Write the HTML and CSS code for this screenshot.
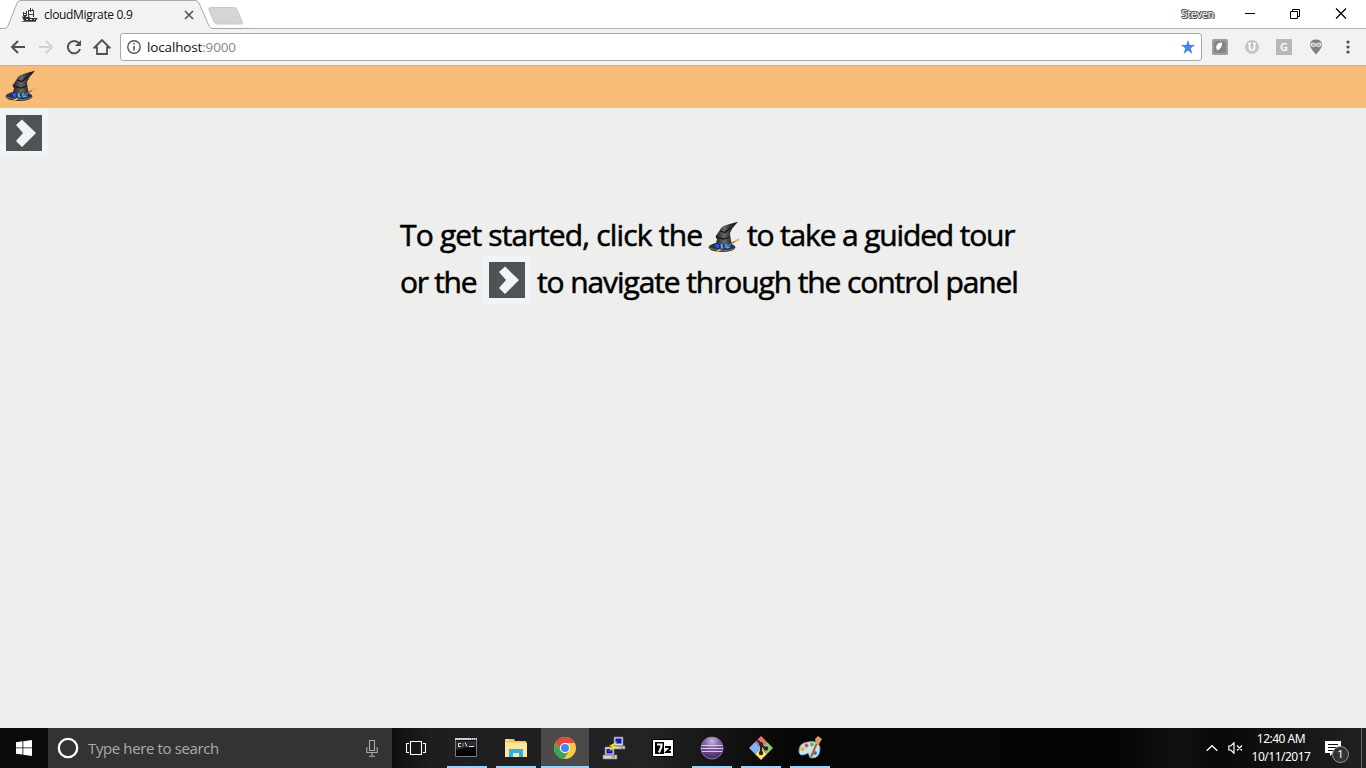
FILE: index.html
```html
<!DOCTYPE html>
<html lang="en">
<head>
<meta charset="utf-8">
<title>cloudMigrate 0.9</title>
<link rel="stylesheet" href="styles.css">
</head>
<body>
<svg class="defs" width="0" height="0" aria-hidden="true">
  <defs>
    <linearGradient id="felt" x1="0" x2="1"><stop offset="0" stop-color="#222"/><stop offset=".4" stop-color="#666"/><stop offset=".7" stop-color="#292929"/><stop offset="1" stop-color="#111"/></linearGradient>
    <radialGradient id="orb" cx=".5" cy=".2" r=".8"><stop offset="0" stop-color="#c9b5e0"/><stop offset=".5" stop-color="#79569f"/><stop offset="1" stop-color="#40265e"/></radialGradient>
    <symbol id="hat" viewBox="0 0 32 32">
      <ellipse cx="14" cy="26.300" rx="13.300" ry="4.800" fill="#353535"/>
      <path d="M1.500 27q12 5 25 .7" fill="none" stroke="#777" stroke-width="1"/>
      <path d="M7.500 24 9 18.500 7.500 15.500 11.500 9.500Q13 5 20 3.500L30 .8 24.500 7 22 12 22.500 17 24 24 17 28Z" fill="url(#felt)"/>
      <path d="m8.500 16 7 2 6.500-2M12 10l5 1.500L22 7" fill="none" stroke="#161616" stroke-width="1.300"/>
      <path d="m6.500 22 7 1.500 10-1 1.500 3.500-8 3-10-1.500Z" fill="#17318b"/>
      <path d="m7.500 23.500 3-.5.5 4-3-.5zm12-.5 4 .5-2 3-3-1z" fill="#2860f0"/>
      <path d="m12.500 23.500 2-.5.5 4-2 .5zm4 1 2-2 1 3 3 1-4 1z" fill="#58b8da"/>
      <path d="M10 30 30.500 18.500" stroke="#806a3a" stroke-width="1.300"/>
      <path d="m8 31 4.500-2.500m14.500-8 4-2.200" stroke="#edba43" stroke-width="1.600"/>
    </symbol>
    <symbol id="go" viewBox="0 0 48 48">
      <path d="M0 0h48v48H0z" fill="#f0f4f6"/><path d="M6 6h36v36H6z" fill="#515254"/>
      <path d="m16 16 6-5.500L36 24 22 38l-6-6 7-8z" fill="#f0f4f6"/>
    </symbol>
  </defs>
</svg>

<header class="browser">
  <div class="titlebar">
    <svg class="tab-shape" width="250" height="29" viewBox="0 0 250 29"><path d="M0 28.500H4Q7 28.500 8 26L17 3Q18 .5 21 .5H195Q198 .5 199 3L209 26Q210 28.500 213 28.500H250V29H0z" fill="#f2f2f2"/><path d="M0 28.500H4Q7 28.500 8 26L17 3Q18 .5 21 .5H195Q198 .5 199 3L209 26Q210 28.500 213 28.500H250" fill="none" stroke="#a9a9a9"/><path d="M211 7.500h23q2 0 3 2l5.500 13q.5 1.500-1.500 1.500h-24q-2 0-3-2l-5-12q-1-2.500 2-2.500z" fill="#d5d5d5" stroke="#c8c8c8"/></svg>
    <div class="tab">
      <svg width="16" height="16" viewBox="0 0 16 16"><path d="M0 9.500h2V8h2v2h4v1h7.500l-1.500 3H2z" fill="#333"/><path d="M1.500 5v4M4.500 4v5M2 6.500h3M6.500 3v7M6 3.500h5M8.500 1v4M11.500 3v7M7 7.500h4M10.500 2v2" fill="none" stroke="#3c3c3c"/><path d="M0 14.500h14" stroke="#666"/><path d="M4 12.500h2m2 0h2m2 0h1" stroke="#ddd"/></svg>
      <span class="tab-title">cloudMigrate 0.9</span>
      <svg class="tab-close" width="10" height="10" viewBox="0 0 10 10"><path d="m1 1 8 8m0-8-8 8" stroke="#555" stroke-width="1.700"/></svg>
    </div>
    <div class="window-controls">
      <span class="profile">Steven</span>
      <svg width="12" height="12" viewBox="0 0 12 12"><path d="M2 5.500h10" stroke="#000"/></svg>
      <svg width="12" height="12" viewBox="0 0 12 12"><path d="M1.500 3.500h7v7h-7zM3.500 3V1.500h7v7H9" fill="none" stroke="#000"/></svg>
      <svg width="12" height="12" viewBox="0 0 12 12"><path d="m1 .5 10 10M11 .5l-10 10" stroke="#000" stroke-width="1.200"/></svg>
    </div>
  </div>
  <div class="toolbar">
    <div class="nav">
      <svg width="16" height="16" viewBox="0 0 16 16"><path d="M15 8H2m6-6L2 8l6 6" fill="none" stroke="#505050" stroke-width="2"/></svg>
      <svg width="16" height="16" viewBox="0 0 16 16"><path d="M1 8h13M8 2l6 6-6 6" fill="none" stroke="#d2d2d2" stroke-width="2"/></svg>
      <svg width="16" height="16" viewBox="0 0 16 16"><path d="M13 4.300A6.200 6.200 0 1 0 14 10" fill="none" stroke="#505050" stroke-width="2"/><path d="M15 1v6H9z" fill="#505050"/></svg>
      <svg class="home" width="18" height="16" viewBox="0 0 18 16"><path d="M1.500 8.500 9 1l7.500 7.500H14V15H4V8.500z" fill="none" stroke="#505050" stroke-width="1.800"/></svg>
    </div>
    <div class="address">
      <svg width="14" height="14" viewBox="0 0 14 14"><circle cx="7" cy="7" r="6.200" fill="none" stroke="#555" stroke-width="1.400"/><path d="M7 6v4.500M7 3v1.500" stroke="#555" stroke-width="1.600"/></svg>
      <span class="url">localhost<span class="port">:9000</span></span>
      <svg class="star" width="14" height="14" viewBox="0 0 14 14"><path d="m7 0 1.700 5H14L9.800 8.300 11.400 14 7 10.600 2.600 14l1.600-5.700L0 5h5.300z" fill="#4285f4"/></svg>
    </div>
    <div class="extensions">
      <svg width="16" height="16" viewBox="0 0 16 16"><rect width="16" height="16" rx="1.500" fill="#a0a0a0"/><rect x="2" y="2" width="12" height="12" rx="2" fill="#858585"/><path d="M5.500 11.500Q2.500 8 6 4.500q2-1.500 4-1 .5 5.500-4.500 8z" fill="#fff"/></svg>
      <svg width="16" height="16" viewBox="0 0 16 16"><circle cx="8" cy="8" r="7" fill="#c5c5c5"/><path d="M4 4.500h3M9 4.500h3M5.500 5v3.500Q5.500 11 8 11t2.500-2.500V5" fill="none" stroke="#fff" stroke-width="1.600"/></svg>
      <span class="ext-g">G</span>
      <svg width="16" height="16" viewBox="0 0 16 16"><path d="M2 6Q2 .5 8 .5T14 6Q14 9 8 15.500 2 9 2 6z" fill="#808080"/><path d="M2.500 4q2-1 5.500.5 3.500-1.500 5.500-.5.500 3-2 4-2 .5-3.500-1-1.500 1.500-3.500 1-2.500-1-2-4z" fill="#ddd"/><path d="M4 6h3m2 0h3" stroke="#888"/></svg>
      <svg class="menu" width="4" height="14" viewBox="0 0 4 14"><g fill="#505050"><circle cx="2" cy="2" r="1.600"/><circle cx="2" cy="7" r="1.600"/><circle cx="2" cy="12" r="1.600"/></g></svg>
    </div>
  </div>
</header>

<div class="app-bar"><svg width="32" height="32"><use href="#hat"/></svg></div>
<main class="page">
  <svg class="panel-toggle" width="48" height="48"><use href="#go"/></svg>
  <section class="intro">
    <div class="line">
      <span class="phrase get">To get started, click the</span>
      <svg class="inline-hat" width="32" height="32"><use href="#hat"/></svg>
      <span class="phrase tour">to take a guided tour</span>
    </div>
    <div class="line">
      <span class="phrase or">or the</span>
      <svg class="inline-go" width="48" height="48"><use href="#go"/></svg>
      <span class="phrase navigate">to navigate through the control panel</span>
    </div>
  </section>
</main>

<footer class="taskbar">
  <div class="start"><svg width="16" height="16" viewBox="0 0 16 16"><path d="M0 2.200 6.500 1.300v6.200H0zM7.300 1.200 16 0v7.500H7.300zM0 8.300h6.500v6.300L0 13.700zm7.300 0H16V16l-8.700-1.200z" fill="#fff"/></svg></div>
  <div class="search">
    <svg width="22" height="22" viewBox="0 0 22 22"><circle cx="11" cy="11" r="9.200" fill="none" stroke="#fff" stroke-width="2.300"/></svg>
    <span class="search-text">Type here to search</span>
    <svg class="mic" width="12" height="17" viewBox="0 0 12 17"><path d="M3.500.5h5v10h-5zM.8 7v5.500h10.400V7M6 13v3M3 16.300h6" fill="none" stroke="#aaa" stroke-width="1.100"/></svg>
  </div>
  <div class="task-view"><svg width="20" height="14" viewBox="0 0 20 14"><path d="M4.500.5h11v13h-11zM3 2.500H.5v9H3m14-9h2.500v9H17" fill="none" stroke="#fff" stroke-width="1.100"/></svg></div>
  <div class="apps">
    <div class="app open"><svg class="terminal" width="24" height="20" viewBox="0 0 24 20"><path d="M1.500.5h21v18h-21z" fill="#050505" stroke="#777c82"/><path d="M1 0h22v2H1z" fill="#c4cdd9"/><path d="M17 1h1m1 0h1m1 0h1" stroke="#456"/><path d="M2 3h20v6q-10 0-20 3z" fill="#2d2d2d"/><path d="M7 5.500H4.500v3H7m2-3v1m0 1v1m2-4 2 4m2 0h5" fill="none" stroke="#e5e5e5"/></svg></div>
    <div class="app open"><svg width="22" height="20" viewBox="0 0 22 20"><path d="M0 1h9l1 2h11v16H0z" fill="#ecc55d"/><path d="M0 4.500h22V19H0z" fill="#ffe69a"/><path d="M1 2h3" stroke="#fff"/><path d="M4 19v-8h14v8h-4v-4H8v4z" fill="#32aee5"/></svg></div>
    <div class="app open active"><svg width="22" height="22" viewBox="0 0 22 22"><circle cx="11" cy="11" r="11" fill="#f9ca3e"/><path d="M1.500 5.500A11 11 0 0 1 20.700 6H11a5 5 0 0 0-4.500 7z" fill="#df4b3f"/><path d="M1.500 5.500A11 11 0 0 0 10 22l5-8a5 5 0 0 1-8.500-.5z" fill="#3ba45b"/><circle cx="11" cy="11" r="5" fill="#fff"/><circle cx="11" cy="11" r="4" fill="#4285f4"/></svg></div>
    <div class="app"><svg width="24" height="24" viewBox="0 0 24 24"><g fill="#d8d8d8" stroke="#777" stroke-width=".7"><path d="M12 1h9v9h-9zM10 10h13v3H10zM3 11h9v8H3zM1 19h14v4H1z"/></g><path d="M13.500 2.500h6v5h-6zM4.500 13h6v4.500h-6z" fill="#1010c8"/><path d="m16 5-9 5 4 1-5 5 9-5-4-1z" fill="#fff000"/><path d="M19 12h2M10 21h3" stroke="#666"/></svg></div>
    <div class="app"><svg width="24" height="20" viewBox="0 0 24 20"><path d="M1.500 1.500h21v17h-21z" fill="#fff" stroke="#000"/><path d="M4 4h9v12H4z" fill="#000"/><path d="M6 6.500h4.500v2L8 14.500" fill="none" stroke="#fff" stroke-width="2"/><path d="M14 9h5v1.500L15.500 14H20" fill="none" stroke="#000" stroke-width="2"/></svg></div>
    <div class="app open"><svg width="24" height="24" viewBox="0 0 24 24"><circle cx="12" cy="12" r="11" fill="url(#orb)" stroke="#8c78a4"/><path d="M2 9.500h20M1 12.500h22M2 15.500h20" stroke="#d9cbe8"/></svg></div>
    <div class="app open"><svg width="24" height="24" viewBox="0 0 24 24"><path d="m12 0 6 6-6 6-6-6z" fill="#f07078"/><path d="m6 6 6 6-6 6-6-6z" fill="#81b4f3"/><path d="m18 6 6 6-6 6-6-6z" fill="#8fd072"/><path d="m12 12 6 6-6 6-6-6z" fill="#fbe377"/><path d="m8 4 4 4v10m0-9 5 4" fill="none" stroke="#29241f" stroke-width="2"/><g fill="#29241f"><circle cx="12" cy="8" r="2"/><circle cx="17" cy="12.500" r="2.200"/><circle cx="12" cy="17" r="2.200"/></g></svg></div>
    <div class="app open"><svg width="24" height="24" viewBox="0 0 24 24"><path d="M1 15Q1 7 10 6q11-2 12 6 0 10-8 10-3 0-3-3t-3-1q-7 3-7-3z" fill="#c9e5f2" stroke="#75a9c4"/><circle cx="4.500" cy="13" r="2" fill="#e7b131"/><circle cx="8.500" cy="9.500" r="2" fill="#e25236"/><circle cx="14" cy="8.500" r="2" fill="#63b84e"/><circle cx="17" cy="17" r="2" fill="#3577b9"/><path d="m13 21 6-14" stroke="#b46027" stroke-width="2"/><path d="m18 8-1-5 3-3 4 3-3 5z" fill="#dc9d62"/></svg></div>
  </div>
  <div class="tray">
    <svg width="12" height="8" viewBox="0 0 12 8"><path d="m.7 6.700 5.300-5 5.300 5" fill="none" stroke="#fff" stroke-width="1.300"/></svg>
    <svg class="sound" width="16" height="12" viewBox="0 0 16 12"><path d="M.8 4h2L6 .8v10.400L2.800 8h-2zM9 3.500l5 5m0-5-5 5" fill="none" stroke="#fff" stroke-width="1.200"/></svg>
    <div class="clock"><span class="time">12:40 AM</span><span class="date">10/11/2017</span></div>
    <div class="notice"><svg width="16" height="15" viewBox="0 0 16 15"><path d="M0 0h16v12H8l-3 3v-3H0z" fill="#fff"/><path d="M3 3.500h10M3 6.500h10M3 9.500h6" stroke="#111"/></svg><span class="badge">1</span></div>
    <div class="show-desktop"></div>
  </div>
</footer>
</body>
</html>
```
FILE: styles.css
```css
* { box-sizing: border-box; }
body { margin: 0; width: 1366px; height: 768px; overflow: hidden; display: flex; flex-direction: column; background: #eeeeed; font-family: "Noto Sans", "Open Sans", sans-serif; }
svg { display: block; flex: none; }
.defs { position: absolute; }
.browser { flex: none; height: 66px; background: #f2f2f2; border-bottom: 1px solid #b2b2b2; }
.titlebar { position: relative; height: 29px; background: #fff; border-bottom: 1px solid #b0b0b0; display: flex; justify-content: space-between; }
.tab-shape { position: absolute; left: 0; top: 0; }
.tab { position: relative; width: 194px; padding-left: 22px; display: flex; align-items: center; gap: 6px; height: 30px; }
.tab-title { font-family: "Open Sans", sans-serif; font-size: 12px; letter-spacing: -.32px; color: #111; white-space: nowrap; margin-top: -2px; }
.tab-close { margin-left: auto; }
.window-controls { display: flex; align-items: center; height: 27px; padding-right: 19px; gap: 34px; }
.profile { font-size: 11px; letter-spacing: -.35px; color: #fff; text-shadow: 1px 0 #555, -1px 0 #555, 0 1px #555, 0 -1px #555, 1px 1px #555, -1px -1px #555; margin-right: -5px; }
.toolbar { height: 36px; display: flex; align-items: center; }
.nav { width: 120px; padding-left: 10px; display: flex; align-items: center; gap: 12px; flex: none; }
.home { margin-left: -1px; }
.address { width: 1082px; height: 28px; border: 1px solid #a9a9a9; border-radius: 3px; background: #fff; display: flex; align-items: center; padding: 0 6px; flex: none; }
.url { margin-left: 6px; font-family: "Open Sans", sans-serif; font-size: 13.5px; color: #111; letter-spacing: -.15px; }
.port { color: #888; }
.star { margin-left: auto; }
.extensions { display: flex; align-items: center; margin-left: 10px; gap: 16px; }
.ext-g { width: 16px; height: 16px; background: #b8b8b8; color: #fff; font-size: 11px; line-height: 16px; text-align: center; font-weight: 600; }
.menu { margin-left: 6px; }
.app-bar { height: 42px; flex: none; background: #f7bc78; padding: 4px 0 0 5px; }
.page { height: 620px; flex: none; background: #eeeeed; }
.panel-toggle { margin-top: 1px; }
.intro { margin: 54px 0 0 400px; }
.line { height: 47px; display: flex; align-items: center; font: 400 30px/47px "Open Sans", sans-serif; color: #000; -webkit-text-stroke: .55px #000; }
.phrase { white-space: nowrap; flex: none; }
.get { width: 308px; letter-spacing: -.82px; }
.tour { margin-left: 7px; letter-spacing: -1.16px; }
.or { width: 83px; letter-spacing: -1.3px; }
.inline-hat { margin-top: 5px; }
.inline-go { margin-top: -3px; }
.navigate { margin-left: 6px; letter-spacing: -1.1px; }
.taskbar { height: 40px; flex: none; display: flex; background: linear-gradient(90deg, #0b0b0b 0, #0e0e0e 390px, #1e1e1e 430px, #232323 650px, #060606 790px, #050505 1120px, #111 1180px, #080808 1220px, #222 1366px); color: #fff; }
.start { width: 48px; display: grid; place-items: center; }
.search { width: 344px; background: #333; display: flex; align-items: center; padding: 0 14px 0 9px; }
.search-text { margin-left: 9px; color: #ababab; font-family: "Open Sans", sans-serif; font-size: 15px; letter-spacing: -.38px; }
.mic { margin-left: auto; }
.task-view { width: 48px; display: grid; place-items: center; }
.apps { display: flex; gap: 1px; margin-left: 3px; }
.app { width: 48px; display: grid; place-items: center; }
.terminal { margin-right: 2px; }
.open { background: linear-gradient(#9fd2fa, #9fd2fa) 50% 100% / 40px 2px no-repeat; }
.active { background: linear-gradient(#9fd2fa, #9fd2fa) 0 100% / 48px 2px no-repeat #4b4b4b; }
.tray { margin-left: auto; display: flex; align-items: center; }
.sound { margin-left: 10px; }
.clock { width: 74px; margin-left: 0; display: flex; flex-direction: column; align-items: center; font-size: 12px; line-height: 18px; letter-spacing: -.5px; }
.notice { position: relative; margin-left: 7px; width: 36px; }
.badge { position: absolute; left: 7px; top: 5px; width: 17px; height: 17px; border: 1px solid #999; border-radius: 50%; background: #333; font-size: 11px; line-height: 14px; text-align: center; }
.show-desktop { width: 5px; height: 40px; border-left: 1px solid #666; }
```
